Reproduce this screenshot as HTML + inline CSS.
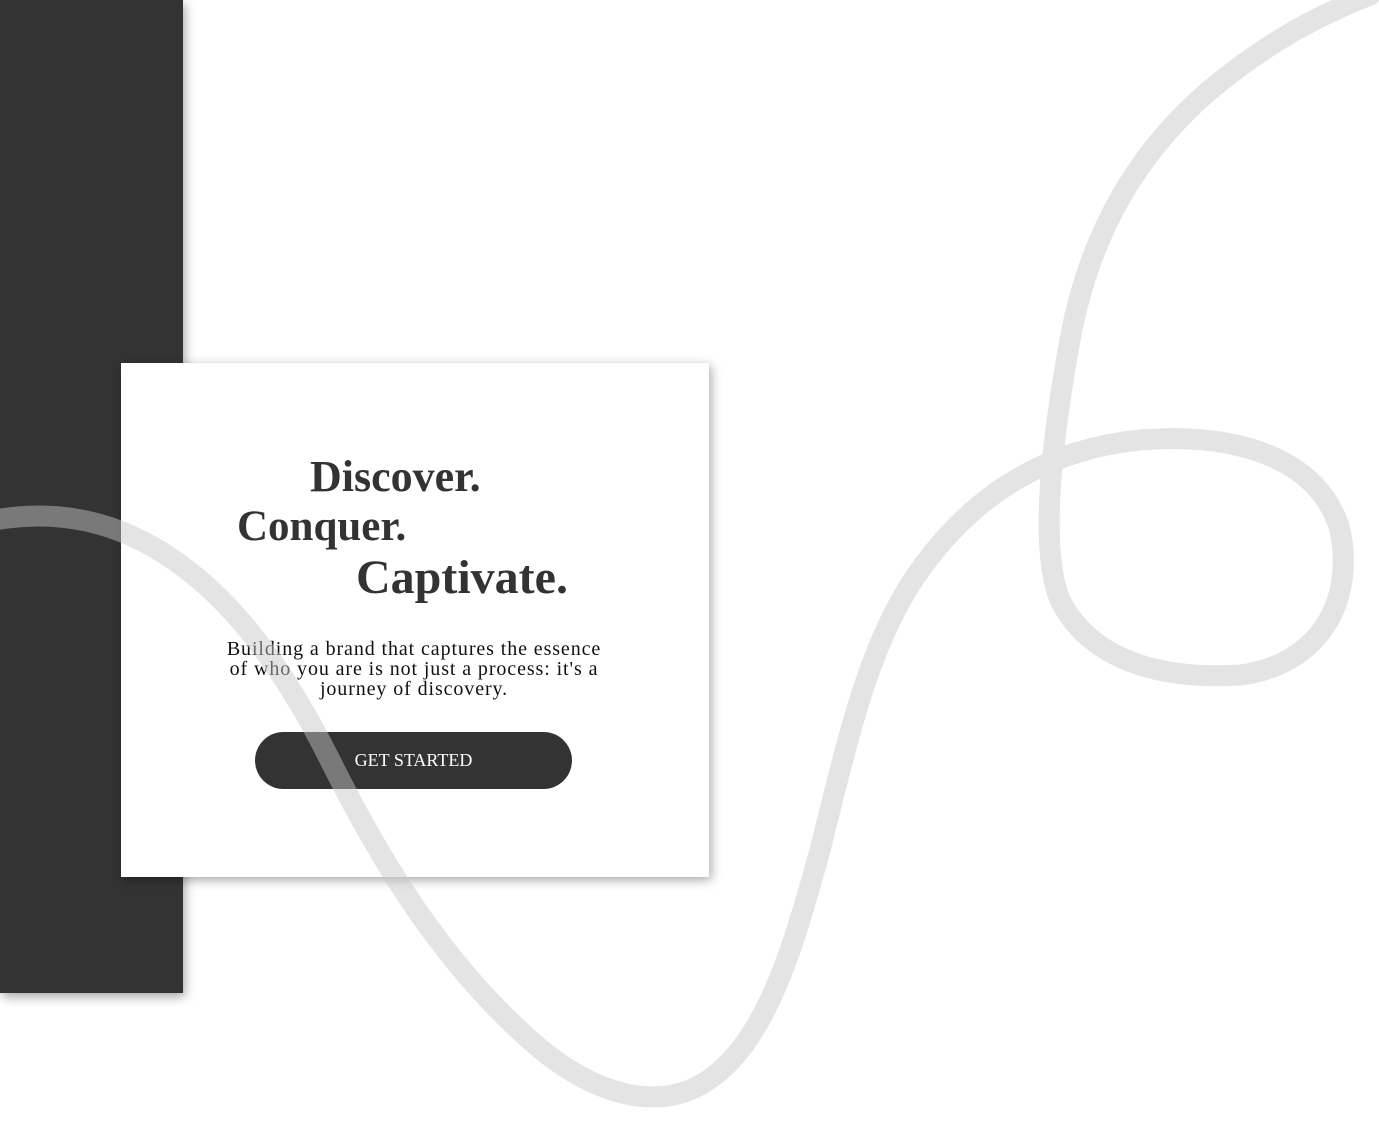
<!DOCTYPE html>
<html><head><meta charset="utf-8"><style>
html,body{margin:0;padding:0;width:1379px;height:1138px;overflow:hidden;background:#fff;position:relative;font-family:"Liberation Serif",serif}
.panel{position:absolute;left:0;top:0;width:183px;height:993px;background:#333;box-shadow:2px 4px 10px rgba(0,0,0,.35)}
.card{position:absolute;left:121px;top:363px;width:588px;height:514px;background:#fff;box-shadow:2px 3px 10px rgba(0,0,0,.35)}
.h{position:absolute;font-weight:bold;color:#333;white-space:nowrap;line-height:1}
p{position:absolute;left:164px;top:639px;width:500px;margin:0;text-align:center;font-size:20px;line-height:20px;color:#111;white-space:nowrap;letter-spacing:0.9px}
.btn{position:absolute;left:255px;top:732px;width:317px;height:57px;border-radius:29px;background:#333;color:#fff;font-size:18px;text-align:center;line-height:57px}
svg{position:absolute;left:0;top:0}
</style></head><body>
<div class="panel"></div>
<div class="card"></div>
<div class="h" style="left:310px;top:455px;font-size:44px">Discover.</div>
<div class="h" style="left:237px;top:505px;font-size:43px">Conquer.</div>
<div class="h" style="left:356px;top:554px;font-size:48px">Captivate.</div>
<p>Building a brand that captures the essence<br>of who you are is not just a process: it's a<br>journey of discovery.</p>
<div class="btn">GET STARTED</div>
<svg width="1379" height="1138"><path d="M-5,520 C40,512 90,515 140,540 C220,580 280,660 330,760 C380,860 440,960 530,1040 C580,1085 640,1110 690,1090 C760,1060 790,960 820,850 C850,730 870,640 920,570 C970,500 1040,450 1140,440 C1240,432 1320,460 1340,530 C1355,600 1320,665 1240,675 C1160,680 1090,660 1060,600 C1040,550 1050,450 1070,340 C1090,230 1140,150 1210,90 C1270,40 1320,15 1370,-5" fill="none" stroke="rgba(199,199,199,0.48)" stroke-width="21" stroke-linecap="round"/></svg>
</body></html>
